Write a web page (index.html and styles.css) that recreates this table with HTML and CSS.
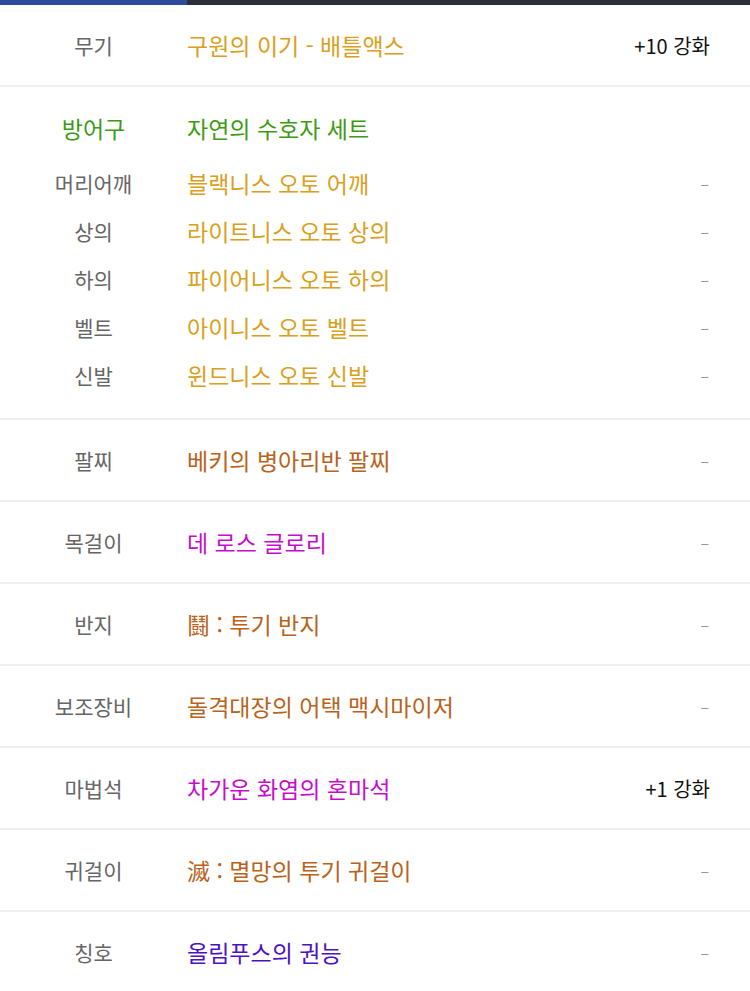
FILE: index.html
```html
<!DOCTYPE html>
<html lang="ko">
<head>
  <meta charset="UTF-8" />
  <title>장비</title>
  <meta name="viewport" content="width=device-width, initial-scale=1" />
  <link rel="stylesheet" href="styles.css">
</head>
<body>

  <!-- Tab-Leiste -->
  <div class="tabbar"><div class="tab-active"></div></div>

  <div class="equip">
    <div class="row">
      <span class="label">무기</span>
      <span class="name c-gold">구원의 이기 - 배틀액스</span>
      <span class="extra strong">+10 강화</span>
    </div>

    <!-- Rüstungs-Set -->
    <div class="set">
      <div class="line set-head">
        <span class="label c-green">방어구</span>
        <span class="name c-green">자연의 수호자 세트</span>
      </div>
      <div class="line">
        <span class="label">머리어깨</span>
        <span class="name c-gold">블랙니스 오토 어깨</span>
        <span class="extra">–</span>
      </div>
      <div class="line">
        <span class="label">상의</span>
        <span class="name c-gold">라이트니스 오토 상의</span>
        <span class="extra">–</span>
      </div>
      <div class="line">
        <span class="label">하의</span>
        <span class="name c-gold">파이어니스 오토 하의</span>
        <span class="extra">–</span>
      </div>
      <div class="line">
        <span class="label">벨트</span>
        <span class="name c-gold">아이니스 오토 벨트</span>
        <span class="extra">–</span>
      </div>
      <div class="line">
        <span class="label">신발</span>
        <span class="name c-gold">윈드니스 오토 신발</span>
        <span class="extra">–</span>
      </div>
    </div>

    <div class="row">
      <span class="label">팔찌</span>
      <span class="name c-brown">베키의 병아리반 팔찌</span>
      <span class="extra">–</span>
    </div>
    <div class="row">
      <span class="label">목걸이</span>
      <span class="name c-pink">데 로스 글로리</span>
      <span class="extra">–</span>
    </div>
    <div class="row">
      <span class="label">반지</span>
      <span class="name c-brown">鬪 : 투기 반지</span>
      <span class="extra">–</span>
    </div>
    <div class="row">
      <span class="label">보조장비</span>
      <span class="name c-brown">돌격대장의 어택 맥시마이저</span>
      <span class="extra">–</span>
    </div>
    <div class="row">
      <span class="label">마법석</span>
      <span class="name c-pink">차가운 화염의 혼마석</span>
      <span class="extra strong">+1 강화</span>
    </div>
    <div class="row">
      <span class="label">귀걸이</span>
      <span class="name c-brown">滅 : 멸망의 투기 귀걸이</span>
      <span class="extra">–</span>
    </div>
    <div class="row">
      <span class="label">칭호</span>
      <span class="name c-purple">올림푸스의 권능</span>
      <span class="extra">–</span>
    </div>
  </div>

</body>
</html>
```

FILE: styles.css
```css
body {
  margin: 0; padding: 0;
  font-family: 'Noto Sans CJK KR', 'Noto Sans', sans-serif;
  background: #fff;
  color: #222;
}

/* --- Tab bar --- */
.tabbar {
  height: 5px;
  background: #2b2f3a;
}
.tab-active {
  width: 187px;
  height: 100%;
  background: #2e4a9a;
}

/* --- Rows --- */
.row, .line {
  display: flex;
  align-items: center;
}
.row {
  height: 80px;
  border-bottom: 2px solid #efefef;
}
.set {
  padding: 17px 0 19px;
  border-bottom: 2px solid #efefef;
}
.line {
  height: 48px;
}
.set-head {
  margin-bottom: 7px;
}
.label {
  width: 187px;
  flex-shrink: 0;
  text-align: center;
  font-size: 21px;
  color: #666;
}
.name {
  flex: 1;
  font-size: 23px;
}
.extra {
  padding-right: 41px;
  font-size: 16px;
  color: #999;
}
.extra.strong {
  padding-right: 40px;
  font-size: 20px;
  color: #111;
}
.set-head .label { font-size: 23px; }

/* --- Item colours --- */
.c-gold   { color: #d9a020; }
.c-green  { color: #3d9a14; }
.c-brown  { color: #b8621a; }
.c-pink   { color: #c70ccc; }
.c-purple { color: #4b12c4; }
```
